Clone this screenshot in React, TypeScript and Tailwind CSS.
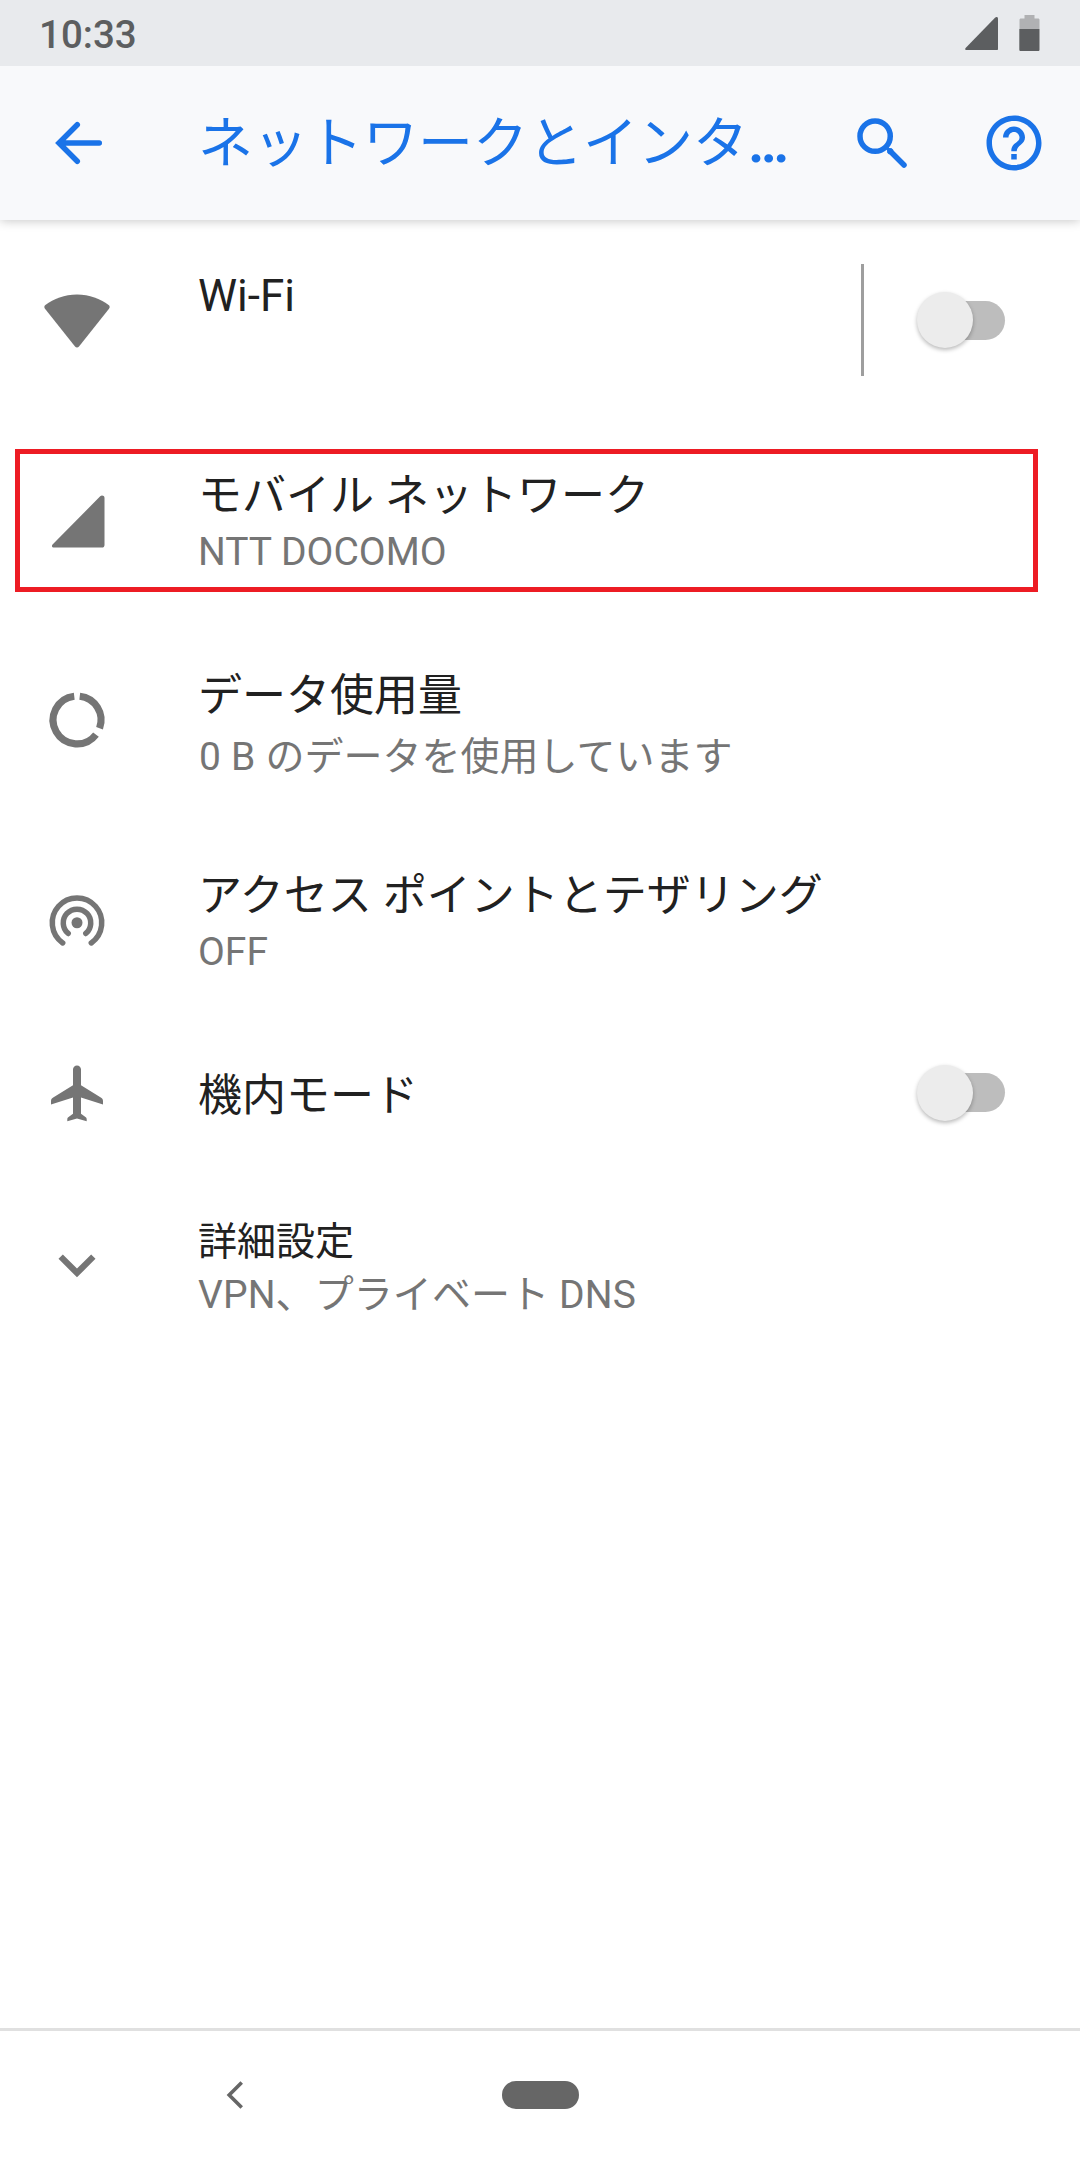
import type { ReactNode } from "react";

function NavUpIcon() {
  return (
    <svg viewBox="0 0 24 24" className="h-[66px] w-[66px]" fill="none" stroke="currentColor" strokeWidth="2" strokeLinecap="round">
      <path d="M20.1 12H6M12.1 5.35L5.45 12l6.65 6.65" />
    </svg>
  );
}

function SearchIcon() {
  return (
    <svg viewBox="0 0 24 24" className="h-[66px] w-[66px]" fill="none" stroke="currentColor" strokeWidth="2">
      <circle cx="9.5" cy="9.5" r="5.5" />
      <path d="M13.4 13.4l1.2 1.2" strokeWidth="1.2" />
      <path d="M15 15l5 5" strokeLinecap="round" />
      <path d="M13.9 14.3l.4-.4h1.2l.7.7-1.6 1.6-.7-.7z" fill="currentColor" stroke="none" />
    </svg>
  );
}

function HelpIcon() {
  return (
    <svg viewBox="0 0 24 24" className="h-[66px] w-[66px]" fill="currentColor">
      <path d="M11 18h2v-2h-2v2zm1-16C6.48 2 2 6.48 2 12s4.48 10 10 10 10-4.48 10-10S17.52 2 12 2zm0 18c-4.41 0-8-3.59-8-8s3.59-8 8-8 8 3.59 8 8-3.59 8-8 8zm0-14c-2.21 0-4 1.79-4 4h2c0-1.1.9-2 2-2s2 .9 2 2c0 2-3 1.75-3 5h2c0-2.25 3-2.5 3-5 0-2.21-1.79-4-4-4z" />
    </svg>
  );
}

function WifiIcon() {
  return (
    <svg viewBox="0 0 66 66" className="h-[66px] w-[66px]" fill="currentColor">
      <path d="M33 7.5c12.5 0 23.3 4.200 31.600 10.500 1.300 1 1.400 2.500.4 3.800L35 59.600c-1.100 1.300-2.900 1.300-4 0L1 21.800c-1-1.300-.9-2.800.4-3.800C9.700 11.700 20.500 7.500 33 7.500z" />
    </svg>
  );
}

function SignalIcon() {
  return (
    <svg viewBox="0 0 66 66" className="h-[66px] w-[66px]" fill="currentColor">
      <path d="M8.8 57.300L56.200 9.300c1.500-1.500 4.300-.6 4.300 1.500V58c0 1.700-1 2.600-2.600 2.600H10.200c-2.200 0-3-1.700-1.400-3.300z" />
    </svg>
  );
}

function DataUsageIcon() {
  return (
    <svg viewBox="0 0 24 24" className="h-[66px] w-[66px]" fill="none" stroke="currentColor" strokeWidth="2.6">
      <path d="M13 3.350A8.700 8.700 0 0 1 20.200 15" />
      <path d="M18.900 17.300A8.700 8.700 0 1 1 11 3.350" />
    </svg>
  );
}

function TetheringIcon() {
  return (
    <svg viewBox="0 0 24 24" className="h-[66px] w-[66px]" fill="none" stroke="currentColor" strokeWidth="2" strokeLinecap="round">
      <circle cx="12" cy="13" r="2" fill="currentColor" stroke="none" />
      <path d="M8.800 16.900a5 5 0 1 1 6.400 0" />
      <path d="M6.800 20.350a9 9 0 1 1 10.400 0" />
    </svg>
  );
}

function AirplaneIcon() {
  return (
    <svg viewBox="0 0 66 66" className="h-[66px] w-[66px]" fill="currentColor">
      <path d="M33 5.500c-2.300 0-4 1.800-4 4v15.700L9.200 37.400C7.600 38.400 7 39.400 7 41.200v3.300l22-6.900v16.200l-4.400 3.200c-1 .7-1.300 1.400-1.300 2.500v1.800L33 58.600l9.700 2.700v-1.800c0-1.100-.3-1.800-1.300-2.500L37 53.800V37.600l22 6.900v-3.300c0-1.800-.6-2.800-2.200-3.800L37 25.200V9.500c0-2.200-1.700-4-4-4z" />
    </svg>
  );
}

function ExpandIcon() {
  return (
    <svg viewBox="0 0 24 24" className="-ml-[4px] h-[74px] w-[74px]" fill="currentColor">
      <path d="M16.590 8.590L12 13.170 7.410 8.590 6 10l6 6 6-6z" />
    </svg>
  );
}

function Switch() {
  return (
    <div className="flex h-[57px] w-[91px] items-center">
      <div className="ml-[11px] flex h-[39px] w-[77px] items-center rounded-full bg-[#bdbdbd]">
        <div className="-ml-[11px] h-[56px] w-[56px] shrink-0 rounded-full bg-[#ececec] shadow-[0_2px_4px_rgba(0,0,0,0.28)]" />
      </div>
    </div>
  );
}

type RowProps = {
  icon: ReactNode;
  title: string;
  summary?: string;
  height?: string;
  text?: string;
  titleSize?: string;
  summarySize?: string;
  children?: ReactNode;
};

function Row({
  icon,
  title,
  summary,
  height = "h-[200px]",
  text = "pt-[50px]",
  titleSize = "text-[44px] leading-[52px]",
  summarySize = "leading-[60px]",
  children,
}: RowProps) {
  return (
    <div className={`flex ${height} pl-[44px]`}>
      <div className="flex w-[154px] items-center text-[#757575]">{icon}</div>
      <div className={`flex-1 whitespace-nowrap ${text}`}>
        <div className={`text-[#212121] ${titleSize}`}>{title}</div>
        {summary && <div className={`text-[39px] text-[#757575] ${summarySize}`}>{summary}</div>}
      </div>
      {children}
    </div>
  );
}

export default function App() {
  return (
    <div
      lang="ja"
      className="flex h-[2160px] w-[1080px] flex-col overflow-hidden bg-white font-['Roboto','Noto_Sans_CJK_JP',sans-serif]"
    >
      <div className="z-20 flex h-[66px] shrink-0 items-center justify-between bg-[#e8eaed] pr-[40px] pl-[39px] text-[#5c5e60]">
        <span className="pt-[4px] text-[38.5px] leading-[44px] font-medium">10:33</span>
        <div className="flex items-start gap-[21px]">
          <svg viewBox="0 0 33 33" className="mt-[2px] h-[33px] w-[33px]" fill="currentColor">
            <path d="M.6 31L30 .8c1.300-1.300 3-.8 3 .9V32c0 .7-.4 1-1 1H1.500C.2 33-.2 31.900.6 31z" />
          </svg>
          <svg viewBox="0 0 21 36" className="h-[36px] w-[21px]">
            <path d="M5.500 0h10v3.500h3.500c1 0 1.500.5 1.500 1.500v9H.5V5c0-1 .5-1.500 1.500-1.500h3.500z" fill="#b0b1b3" />
            <path d="M.3 14h20.200v20.500c0 1-.5 1.500-1.500 1.500H1.800C.8 36 .3 35.500.3 34.500z" fill="currentColor" />
          </svg>
        </div>
      </div>

      <header className="z-10 flex h-[154px] shrink-0 items-center bg-[#f8f9fb] pr-[33px] pl-[44px] text-[#1a73e8] shadow-[0_1px_10px_rgba(0,0,0,0.22)]">
        <NavUpIcon />
        <h1 className="ml-[88px] w-[651px] text-[55px] leading-[66px] whitespace-nowrap">
          ネットワークとインタ<span className="font-bold">…</span>
        </h1>
        <SearchIcon />
        <div className="ml-[66px]">
          <HelpIcon />
        </div>
      </header>

      <main className="relative flex-1">
        <Row icon={<WifiIcon />} title="Wi-Fi">
          <div className="flex items-center pr-[72px]">
            <div className="mr-[53px] h-[112px] w-[3px] bg-[#9e9e9e]" />
            <Switch />
          </div>
        </Row>
        <Row icon={<SignalIcon />} title="モバイル ネットワーク" summary="NTT DOCOMO" />
        <Row
          icon={<DataUsageIcon />}
          title="データ使用量"
          summary="0 B のデータを使用しています"
          summarySize="pl-[1px] leading-[70px] [word-spacing:0.5px]"
        />
        <Row icon={<TetheringIcon />} title="アクセス ポイントとテザリング" summary="OFF" />
        <Row icon={<AirplaneIcon />} title="機内モード" height="h-[145px]">
          <div className="flex items-center pr-[72px]">
            <Switch />
          </div>
        </Row>
        <Row
          icon={<ExpandIcon />}
          title="詳細設定"
          summary="VPN、プライベート DNS"
          text="pt-[51px]"
          titleSize="text-[39px] leading-[52px]"
          summarySize="leading-[55px] tracking-[0.1px]"
        />
        {/* highlight around the mobile network entry */}
        <div className="absolute top-[229px] left-[15px] h-[143px] w-[1023px] border-[5px] border-[#ed1c24]" />
      </main>

      <nav className="flex h-[132px] shrink-0 items-center border-t-[3px] border-[#e0e0e0] pb-[2px] text-[#666666]">
        <svg viewBox="0 0 18 28" className="ml-[226px] h-[28px] w-[18px]" fill="none" stroke="currentColor" strokeWidth="3.6">
          <path d="M15.700 1.500L3.200 14l12.500 12.500" />
        </svg>
        <div className="ml-[258px] h-[28px] w-[77px] rounded-full bg-[#666666]" />
      </nav>
    </div>
  );
}
